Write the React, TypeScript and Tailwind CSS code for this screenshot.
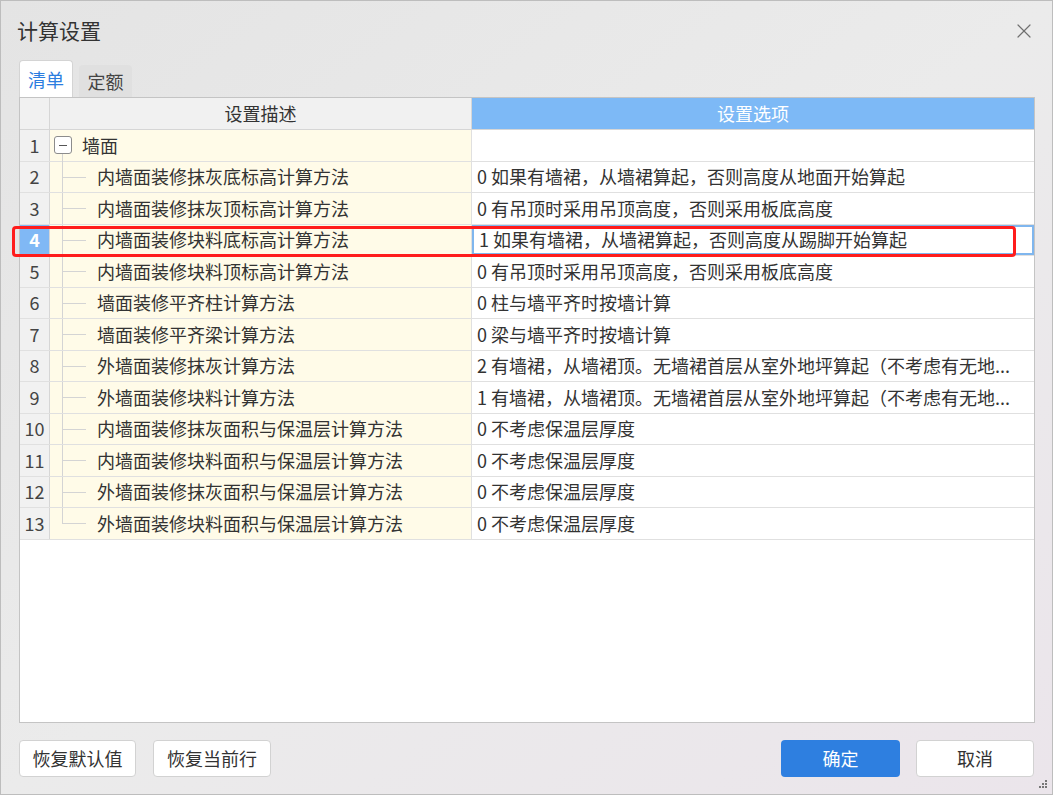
import { X } from "lucide-react";

interface Row {
  no: number;
  desc: string;
  option: string;
}

const rows: Row[] = [
  { no: 2, desc: "内墙面装修抹灰底标高计算方法", option: "0 如果有墙裙，从墙裙算起，否则高度从地面开始算起" },
  { no: 3, desc: "内墙面装修抹灰顶标高计算方法", option: "0 有吊顶时采用吊顶高度，否则采用板底高度" },
  { no: 4, desc: "内墙面装修块料底标高计算方法", option: "1 如果有墙裙，从墙裙算起，否则高度从踢脚开始算起" },
  { no: 5, desc: "内墙面装修块料顶标高计算方法", option: "0 有吊顶时采用吊顶高度，否则采用板底高度" },
  { no: 6, desc: "墙面装修平齐柱计算方法", option: "0 柱与墙平齐时按墙计算" },
  { no: 7, desc: "墙面装修平齐梁计算方法", option: "0 梁与墙平齐时按墙计算" },
  { no: 8, desc: "外墙面装修抹灰计算方法", option: "2 有墙裙，从墙裙顶。无墙裙首层从室外地坪算起（不考虑有无地..." },
  { no: 9, desc: "外墙面装修块料计算方法", option: "1 有墙裙，从墙裙顶。无墙裙首层从室外地坪算起（不考虑有无地..." },
  { no: 10, desc: "内墙面装修抹灰面积与保温层计算方法", option: "0 不考虑保温层厚度" },
  { no: 11, desc: "内墙面装修块料面积与保温层计算方法", option: "0 不考虑保温层厚度" },
  { no: 12, desc: "外墙面装修抹灰面积与保温层计算方法", option: "0 不考虑保温层厚度" },
  { no: 13, desc: "外墙面装修块料面积与保温层计算方法", option: "0 不考虑保温层厚度" },
];

const font = { fontFamily: '"Noto Sans CJK SC", "Noto Sans", sans-serif' };

function App() {
  return (
    <div
      className="relative w-[1053px] h-[795px] overflow-hidden border border-[#bdbdbd] bg-gradient-to-br from-[#e4e4e4] via-[#ebebeb] to-[#ebe5eb] text-[#333]"
      style={font}
    >
      {/* title */}
      <div className="flex h-[59px] items-center justify-between pl-[16px] pr-[16px]">
        <span className="text-[21px] text-[#333]">计算设置</span>
        <X className="h-[24px] w-[24px] text-[#707070]" strokeWidth={1.2} />
      </div>

      {/* tabs */}
      <div className="flex h-[37px] items-end gap-[6px] pl-[18px]">
        <div className="flex h-[37px] w-[54px] items-center justify-center rounded-t-[4px] border border-b-0 border-[#d4d4d4] bg-white text-[18px] text-[#2b7de0]">
          清单
        </div>
        <div className="flex h-[32px] w-[53px] items-center justify-center rounded-t-[4px] bg-[#e0e0e0] text-[18px] text-[#444]">
          定额
        </div>
      </div>

      {/* table */}
      <div className="ml-[18px] h-[626px] w-[1016px] border border-[#c4c4c4] bg-white text-[18px]">
        <div className="grid h-[32px] grid-cols-[30px_422px_1fr] border-b border-[#d6d6d6]">
          <div className="border-r border-[#d6d6d6] bg-[#f1f1f1]" />
          <div className="flex items-center justify-center border-r border-[#d6d6d6] bg-[#f1f1f1] text-[#333]">
            设置描述
          </div>
          <div className="flex items-center justify-center bg-[#7db9f6] text-white">设置选项</div>
        </div>

        <div className="grid h-[31.5px] grid-cols-[30px_422px_1fr] border-b border-[#e0e0e0]">
          <div className="flex items-center justify-center border-r border-[#d6d6d6] bg-[#f1f1f1] text-[#444]">1</div>
          <div className="relative flex items-center border-r border-[#e0e0e0] bg-[#fffbe8] pl-[4px]">
            <div className="flex h-[18px] w-[18px] items-center justify-center rounded-[3px] border border-[#8c8c8c] bg-white">
              <div className="h-[1.5px] w-[8px] bg-[#555]" />
            </div>
            <span className="ml-[10px]">墙面</span>
            <div className="absolute left-[12px] top-[24px] h-[8px] w-px bg-[#d4d4d4]" />
          </div>
          <div />
        </div>

        {rows.map((r, i) => {
          const sel = r.no === 4;
          const last = i === rows.length - 1;
          return (
            <div key={r.no} className="grid h-[31.5px] grid-cols-[30px_422px_1fr] border-b border-[#e0e0e0]">
              <div
                className={`flex items-center justify-center border-r border-[#d6d6d6] ${
                  sel ? "bg-[#80b8f5] font-bold text-white" : "bg-[#f1f1f1] text-[#444]"
                }`}
              >
                {r.no}
              </div>
              <div className="relative flex items-center border-r border-[#e0e0e0] bg-[#fffbe8] pl-[47px]">
                <div className={`absolute left-[12px] top-0 w-px bg-[#d4d4d4] ${last ? "h-[16px]" : "h-full"}`} />
                <div className="absolute left-[12px] top-[15px] h-px w-[24px] bg-[#d4d4d4]" />
                <span className="whitespace-nowrap">{r.desc}</span>
              </div>
              <div
                className={`flex min-w-0 items-center overflow-hidden whitespace-nowrap pl-[5px] ${
                  sel ? "border-2 border-[#7fb6ee] pl-[3px]" : ""
                }`}
              >
                {r.option}
              </div>
            </div>
          );
        })}
      </div>

      {/* buttons */}
      <div className="mt-[17px] flex items-center justify-between pl-[18px] pr-[18px]">
        <div className="flex gap-[17px]">
          <button className="h-[37px] w-[117px] rounded-[4px] border border-[#d2d2d2] bg-white text-[18px] text-[#333]">
            恢复默认值
          </button>
          <button className="h-[37px] w-[118px] rounded-[4px] border border-[#d2d2d2] bg-white text-[18px] text-[#333]">
            恢复当前行
          </button>
        </div>
        <div className="flex gap-[16px]">
          <button className="h-[37px] w-[119px] rounded-[4px] bg-[#2e7fe0] text-[18px] text-white">确定</button>
          <button className="h-[37px] w-[118px] rounded-[4px] border border-[#d2d2d2] bg-white text-[18px] text-[#333]">
            取消
          </button>
        </div>
      </div>

      {/* resize grip */}
      <div className="absolute bottom-[6px] right-[5px] grid grid-cols-3 gap-[1px]">
        {[0, 0, 1, 0, 1, 1, 1, 1, 1].map((v, i) => (
          <div key={i} className={`h-[2px] w-[2px] ${v ? "bg-[#777]" : ""}`} />
        ))}
      </div>

      {/* red annotation */}
      <div className="pointer-events-none absolute left-[11px] top-[225px] h-[31px] w-[1004px] rounded-[4px] border-[3px] border-[#ff1c1c]" />
    </div>
  );
}

export default App;
